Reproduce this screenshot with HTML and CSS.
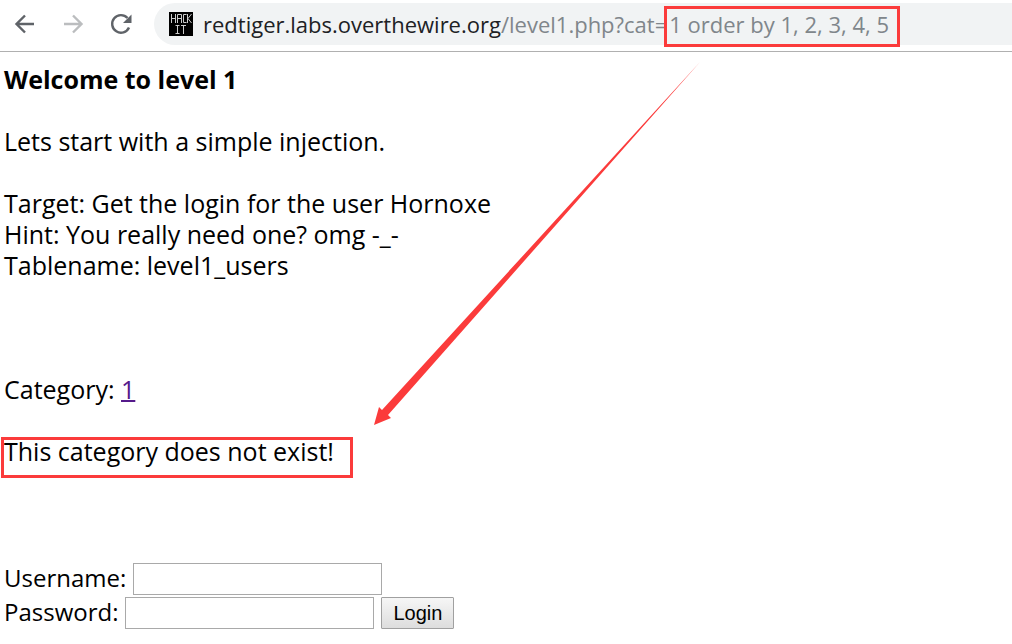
FILE: index.html
```html
<!DOCTYPE html>
<html lang="en">
<head>
<meta charset="utf-8">
<meta name="viewport" content="width=device-width, initial-scale=1">
<title>Level 1</title>
<link rel="stylesheet" href="styles.css">
</head>
<body>
<header class="toolbar">
  <button class="nav" type="button" aria-label="Back"><svg width="24" height="24" viewBox="0 0 24 24"><path d="M21 12H4M12 3.500L3.500 12l8.500 8.500"/></svg></button>
  <button class="nav nav-off" type="button" aria-label="Forward"><svg width="24" height="24" viewBox="0 0 24 24"><path d="M3 12h17M12 3.500l8.500 8.500-8.500 8.500"/></svg></button>
  <button class="nav" type="button" aria-label="Reload"><svg width="24" height="24" viewBox="0 0 24 24"><path d="M20 15.500A8.800 8.800 0 1 1 18.500 6"/><path class="solid" d="M22.500 2.500v8.500h-8.500z"/></svg></button>
  <div class="address">
    <svg class="favicon" width="24" height="24" viewBox="0 0 24 24" aria-hidden="true"><path class="tile" d="M0 0h24v24H0z"/><path class="mark" d="M2.500 2v9M6.500 2v9M2.500 6.500h4M8.500 11V2.500h4V11M8.500 6.500h4M17.500 2.500h-3v8h3M18.500 2v9M22.500 2l-3.500 4.500 3.500 4.500M6.500 13.500h4M8.500 13.500v8M6.500 21.500h4M12 13.500h5M14.500 13.500V22"/></svg>
    <span class="url"><span class="host">redtiger.labs.overthewire.org</span>/level1.php?cat=<mark class="box box-url">1 order by 1, 2, 3, 4, 5</mark></span>
  </div>
</header>
<main class="page">
  <h1>Welcome to level 1</h1>
  <p>Lets start with a simple injection.</p>
  <p>Target: Get the login for the user Hornoxe<br>Hint: You really need one? omg -_-<br>Tablename: level1_users</p>
  <p class="category">Category: <a href="?cat=1">1</a></p>
  <p class="box box-result">This category does not exist!</p>
  <form class="login">
    <div class="row"><label for="user">Username:</label><input id="user" type="text"></div>
    <div class="row"><label for="pass">Password:</label><input id="pass" type="password"><button type="submit">Login</button></div>
  </form>
</main>
<svg class="arrow" width="328" height="366" viewBox="0 0 328 366" aria-hidden="true"><path d="M326 2L8 350l-3-3-5 18 17-7-3-3z"/></svg>
</body>
</html>
```
FILE: styles.css
```css
* { box-sizing: border-box; }
body {
  position: relative;
  margin: 0;
  background: #fff;
  color: #000;
  font: 25px/31px "Open Sans", "Noto Sans", sans-serif;
}
.toolbar {
  display: flex;
  align-items: center;
  gap: 24px;
  height: 52px;
  padding: 0 0 3px 13px;
  border-bottom: 1px solid #b0b0b0;
}
.nav {
  display: flex;
  padding: 0;
  border: 0;
  background: none;
  color: #5f6368;
}
.nav-off { color: #bbbdbf; }
.nav path { fill: none; stroke: currentColor; stroke-width: 2.4; }
.nav .solid { fill: currentColor; stroke: none; }
.address {
  display: flex;
  flex: 1;
  align-items: center;
  gap: 10px;
  height: 42px;
  margin-left: -3px;
  padding-left: 15px;
  border-radius: 21px 0 0 21px;
  background: #f1f3f4;
}
.favicon { flex: none; }
.favicon .tile { fill: #000; }
.favicon .mark { fill: none; stroke: #ccc; stroke-width: 1; }
.url { color: #80868b; font-size: 22px; white-space: nowrap; }
.host { color: #202124; }
.box {
  background: none;
  color: inherit;
  outline: 3px solid #fb3b3b;
}
.box-url { padding: 0 8px 5px 2px; }
.page { padding: 12px 4px; }
h1, p { margin: 0 0 31px; font-size: inherit; }
.category { margin-top: 93px; }
.category a { color: #551a8b; text-decoration-thickness: 2px; }
.box-result {
  width: fit-content;
  margin-top: 35px;
  padding: 0 16px 12px 0;
  line-height: 23px;
}
.login { margin-top: 87px; }
.row { display: flex; align-items: center; gap: 7px; height: 34px; }
.row label { padding-bottom: 4px; font-size: 24px; }
.row input {
  width: 249px;
  height: 32px;
  border: 1px solid #a9a9a9;
  background: #fff;
  font: inherit;
}
.row button {
  height: 32px;
  padding: 0 11px;
  border: 1px solid #a0a0a0;
  border-radius: 1px;
  background: linear-gradient(#f6f6f6, #dddddd);
  color: #000;
  font: 20px/28px "Liberation Sans", sans-serif;
}
.arrow { position: absolute; top: 60px; left: 374px; fill: #fb3b3b; pointer-events: none; }
```
